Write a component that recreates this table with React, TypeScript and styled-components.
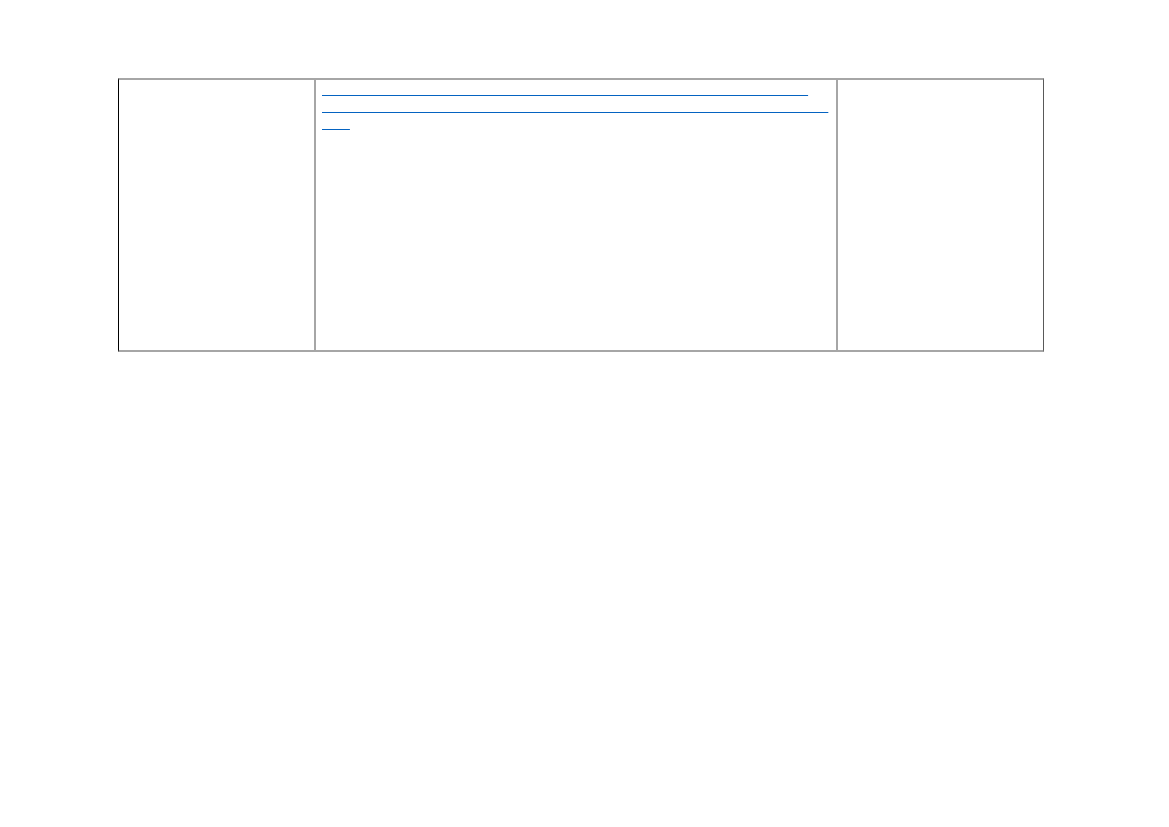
import React from 'react'
import styled, { createGlobalStyle } from 'styled-components'

const GlobalStyle = createGlobalStyle`
  html, body {
    margin: 0;
    padding: 0;
    background: #ffffff;
  }
  body {
    font-family: 'Liberation Sans', Arial, sans-serif;
  }
`

const Page = styled.div`
  width: 1169px;
  height: 827px;
  padding: 78px 0 0 118px;
  box-sizing: border-box;
`

const Table = styled.div`
  display: grid;
  grid-template-columns: 195px 522px 207px;
  width: 926px;
  height: 274px;
  box-sizing: border-box;
  border-top: 2px solid #a6a6a6;
  border-bottom: 2px solid #a6a6a6;
  border-left: 1px solid #000000;
  border-right: 1px solid #595959;
`

const Cell = styled.div<{ $divider?: boolean }>`
  box-sizing: border-box;
  padding: 1px 6px 0;
  border-left: ${p => (p.$divider ? '2px solid #a6a6a6' : 'none')};
`

const Link = styled.a`
  display: block;
  font-family: 'Liberation Mono', 'Courier New', monospace;
  font-size: 15px;
  line-height: 17px;
  color: transparent;
  text-decoration: underline;
  text-decoration-color: #0563c1;
  text-decoration-thickness: 1px;
  text-decoration-skip-ink: none;
  text-underline-offset: 2px;
  white-space: nowrap;
`

const Line = styled.span<{ $spacing?: number }>`
  letter-spacing: ${p => p.$spacing ?? 0}px;
`

const URL =
  'https://assets.publishing.service.gov.uk/government/uploads/system/uploads/attachment_data/file/1234/guidance.pdf'

const lines = [
  { text: URL.slice(0, 54), spacing: 0 },
  { text: URL.slice(54, 110), spacing: 0.04 },
  { text: URL.slice(110), spacing: 0.3 },
]

export default function App() {
  return (
    <Page>
      <GlobalStyle />
      <Table>
        <Cell />
        <Cell $divider>
          <Link href={URL}>
            {lines.map((line, i) => (
              <React.Fragment key={i}>
                <Line $spacing={line.spacing}>{line.text}</Line>
                {i < lines.length - 1 && <br />}
              </React.Fragment>
            ))}
          </Link>
        </Cell>
        <Cell $divider />
      </Table>
    </Page>
  )
}
